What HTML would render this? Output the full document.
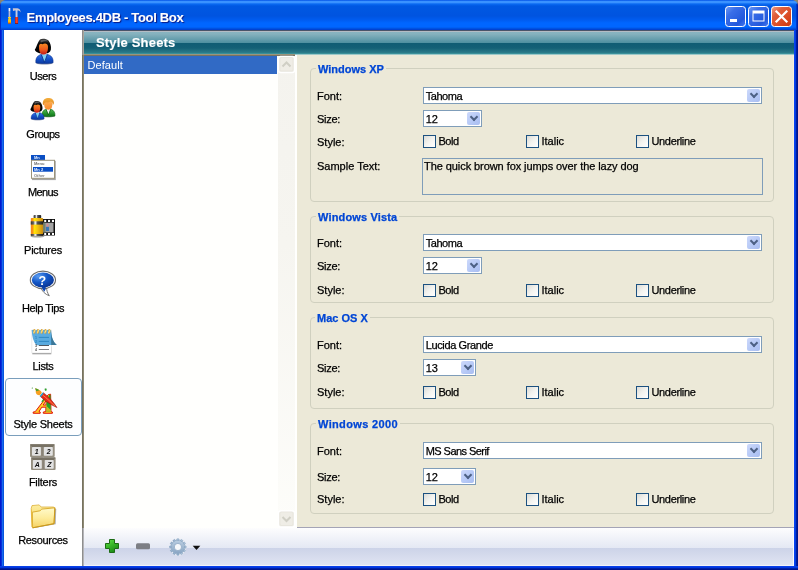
<!DOCTYPE html>
<html><head><meta charset="utf-8"><title>Employees.4DB - Tool Box</title>
<style>
html,body{margin:0;padding:0;}
body{width:798px;height:570px;overflow:hidden;background:#0a55e0;font-family:"Liberation Sans",sans-serif;font-size:11px;color:#000;-webkit-text-stroke:0.25px;}
#win{position:absolute;left:0;top:0;width:798px;height:570px;overflow:hidden;background:#0b54df;will-change:transform;}
.abs{position:absolute;}
#title{position:absolute;left:0;top:0;width:798px;height:30px;background:linear-gradient(to bottom,#0050e6 0px,#3a92ff 1.5px,#3a92ff 2.5px,#0a6af2 4px,#0058e2 6px,#0054e0 16px,#005cf0 20px,#0066ff 23px,#0066ff 27px,#0052e0 28.5px,#003acc 30px);}
#title .cap{-webkit-text-stroke:0.1px;position:absolute;left:26.6px;top:9.5px;font-weight:bold;font-size:13px;line-height:16px;color:#fff;text-shadow:1px 1px 1px #0a1883;white-space:nowrap;letter-spacing:-0.32px;}
#lb{position:absolute;left:0;top:30px;width:4px;height:540px;background:linear-gradient(to right,#0019cf 0,#0019cf 1px,#0831d9 1px,#0831d9 2px,#166aee 2px,#166aee 3px,#0855dd 3px);}
#rb{position:absolute;left:794px;top:30px;width:4px;height:540px;background:linear-gradient(to right,#0842f0 0,#0842f0 1px,#003ce0 1px,#003ce0 2px,#001ea0 2px,#001ea0 3px,#00138c 3px);}
#bb{position:absolute;left:0;top:566px;width:798px;height:4px;background:linear-gradient(to bottom,#0a40e8 0,#0a40e8 1px,#0038e0 1px,#0038e0 2px,#0020a8 2px,#0020a8 3px,#00158c 3px);}
#side{position:absolute;left:4px;top:30px;width:78px;height:536px;background:#fff;}
#sideline{position:absolute;left:82px;top:30px;width:2px;height:536px;background:linear-gradient(to right,#77735f 0,#77735f 1px,#8e8a74 1px);}
#sideline2{position:absolute;left:82px;top:30px;width:2px;height:25px;background:linear-gradient(to right,#8c8c8c 0,#8c8c8c 1px,#a8a49a 1px);}
#sideline3{position:absolute;left:82px;top:528px;width:2px;height:38px;background:linear-gradient(to right,#8e8e8e 0,#8e8e8e 1px,#b4b4b8 1px);}
#hline{position:absolute;left:84px;top:54px;width:211px;height:2px;background:linear-gradient(to bottom,#9a947c 0,#9a947c 1px,#767260 1px);}
#hdr{position:absolute;left:84px;top:30px;width:710px;height:25px;background:linear-gradient(to bottom,#4a5468 0px,#4a5468 1px,#b4bcc4 1px,#b4bcc4 2px,#88b4c0 2px,#86b2be 4px,#4e8fa0 13px,#105c74 13px,#146076 18px,#2a7a88 22.5px,#409aa2 24px,#9cc8c8 24px,#9cc8c8 25px);}
#hdr .t{-webkit-text-stroke:0.1px;position:absolute;left:12px;top:5px;letter-spacing:0.18px;font-weight:bold;font-size:13px;line-height:16px;color:#fff;white-space:nowrap;}
#list{position:absolute;left:84px;top:56px;width:213px;height:472px;background:#fffffd;}
#sel{position:absolute;left:0;top:0;width:193px;height:18px;background:#316ac5;color:#fff;}
#sel span{-webkit-text-stroke:0;position:absolute;left:3.4px;top:3px;letter-spacing:0.1px;line-height:13px;}
#sbar{position:absolute;left:278px;top:56px;width:17px;height:471px;background:linear-gradient(to bottom,#f4f3ee 0,#f6f5f0 40%,#fdfdfa 100%);}
#main{position:absolute;left:297px;top:55px;width:497px;height:472px;background:#ece9d8;}
#mainb{position:absolute;left:297px;top:527px;width:497px;height:1px;background:#a4a4b6;}
#tool{position:absolute;left:84px;top:528px;width:710px;height:38px;background:linear-gradient(to bottom,#fdfdfe 0,#e4e8f4 20px,#ccd3e8 20px,#e0e4f2 37px,#f2f3f8 37px,#f2f3f8 38px);}
.ic{position:absolute;}
.lbl{position:absolute;left:4px;width:78px;text-align:center;line-height:13px;white-space:nowrap;}
.gb{position:absolute;left:310px;width:464px;border:1px solid #d0d0bf;border-radius:4px;box-sizing:border-box;}
.gt{position:absolute;left:316px;padding:0 2px;background:#ece9d8;color:#0046d5;font-weight:bold;line-height:13px;white-space:nowrap;}
.fl{position:absolute;left:317px;line-height:13px;white-space:nowrap;}
.combo{position:absolute;left:423px;height:17px;box-sizing:border-box;border:1px solid #7f9db9;background:#fff;}
.combo span{position:absolute;left:1.7px;top:2px;line-height:13px;white-space:nowrap;}
.combo i{position:absolute;right:1px;top:1px;width:13px;height:13px;border-radius:2px;background:linear-gradient(135deg,#cdd9fb 0,#b5c8f6 60%,#a9bdf0 100%);}
.combo i:after{content:"";position:absolute;left:3.5px;top:1.6px;width:4px;height:4px;border-right:2px solid #4d6185;border-bottom:2px solid #4d6185;transform:rotate(45deg);box-sizing:content-box;}
.cb{position:absolute;width:13px;height:13px;box-sizing:border-box;border:1px solid #1c5180;background:linear-gradient(135deg,#dcdcd7 0,#f3f3ef 50%,#fff 100%);}
.cl{position:absolute;line-height:13px;white-space:nowrap;}
</style></head><body>
<div id="win">
<div id="title"><span class="cap">Employees.4DB - Tool Box</span></div>
<div id="lb"></div><div id="rb"></div><div id="bb"></div>
<div id="side"></div>
<div id="sideline"></div><div id="sideline2"></div><div id="sideline3"></div>
<div id="hdr"><span class="t">Style Sheets</span></div>
<div id="list"><div id="sel"><span>Default</span></div></div>
<div id="sbar"></div>
<div id="main"></div><div id="mainb"></div><div id="hline"></div><div class="abs" style="left:295px;top:55px;width:2px;height:473px;background:#fffffd"></div>
<div id="tool"></div><div class="abs" style="left:793px;top:528px;width:1px;height:38px;background:#fafbfd"></div><div class="abs" style="left:793px;top:55px;width:1px;height:472px;background:#f6f0dc"></div>

<!-- sidebar labels -->
<div class="lbl" style="top:70px;letter-spacing:-0.42px">Users</div>
<div class="lbl" style="top:128px;letter-spacing:-0.46px">Groups</div>
<div class="lbl" style="top:186px;letter-spacing:-0.6px">Menus</div>
<div class="lbl" style="top:244px;letter-spacing:-0.23px">Pictures</div>
<div class="lbl" style="top:302px;letter-spacing:-0.44px">Help Tips</div>
<div class="lbl" style="top:360px;letter-spacing:-0.33px">Lists</div>
<div class="abs" style="left:5px;top:378px;width:77px;height:58px;box-sizing:border-box;border:1px solid #7a9ebc;border-radius:4px;background:#fdfeff"></div>
<div class="lbl" style="top:418px;letter-spacing:-0.23px">Style Sheets</div>
<div class="lbl" style="top:476px;letter-spacing:-0.25px">Filters</div>
<div class="lbl" style="top:534px;letter-spacing:-0.34px">Resources</div>

<!-- group boxes -->
<div class="gb" style="top:68px;height:134px"></div>
<div class="gt" style="top:63px">Windows XP</div>
<div class="gb" style="top:216px;height:87px"></div>
<div class="gt" style="top:211px;letter-spacing:0.15px">Windows Vista</div>
<div class="gb" style="top:317px;height:92px"></div>
<div class="gt" style="top:312px;left:315px">Mac OS X</div>
<div class="gb" style="top:423px;height:91px"></div>
<div class="gt" style="top:418px;letter-spacing:0.35px">Windows 2000</div>

<!-- group 1 -->
<div class="fl" style="top:90px">Font:</div>
<div class="combo" style="top:87px;width:339px"><span style="letter-spacing:-0.44px">Tahoma</span><i></i></div>
<div class="fl" style="top:113px;letter-spacing:-0.3px">Size:</div>
<div class="combo" style="top:110px;width:59px"><span>12</span><i></i></div>
<div class="fl" style="top:136px">Style:</div>
<div class="cb" style="left:423px;top:135px"></div><div class="cl" style="left:438.5px;top:135px;letter-spacing:-0.5px">Bold</div>
<div class="cb" style="left:526px;top:135px"></div><div class="cl" style="left:541.5px;top:135px">Italic</div>
<div class="cb" style="left:636px;top:135px"></div><div class="cl" style="left:651.5px;top:135px;letter-spacing:-0.35px">Underline</div>
<div class="fl" style="top:160px">Sample Text:</div>
<div class="abs" style="left:422px;top:158px;width:341px;height:37px;box-sizing:border-box;border:1px solid #7f9db9"><span class="abs" style="left:1px;top:1px;line-height:13px;white-space:nowrap;letter-spacing:-0.07px">The quick brown fox jumps over the lazy dog</span></div>

<!-- group 2 -->
<div class="fl" style="top:237px">Font:</div>
<div class="combo" style="top:234px;width:339px"><span style="letter-spacing:-0.44px">Tahoma</span><i></i></div>
<div class="fl" style="top:260px;letter-spacing:-0.3px">Size:</div>
<div class="combo" style="top:257px;width:59px"><span>12</span><i></i></div>
<div class="fl" style="top:284px">Style:</div>
<div class="cb" style="left:423px;top:284px"></div><div class="cl" style="left:438.5px;top:284px;letter-spacing:-0.5px">Bold</div>
<div class="cb" style="left:526px;top:284px"></div><div class="cl" style="left:541.5px;top:284px">Italic</div>
<div class="cb" style="left:636px;top:284px"></div><div class="cl" style="left:651.5px;top:284px;letter-spacing:-0.35px">Underline</div>

<!-- group 3 -->
<div class="fl" style="top:339px">Font:</div>
<div class="combo" style="top:336px;width:339px"><span style="letter-spacing:-0.37px">Lucida Grande</span><i></i></div>
<div class="fl" style="top:362px;letter-spacing:-0.3px">Size:</div>
<div class="combo" style="top:359px;width:53px"><span>13</span><i></i></div>
<div class="fl" style="top:386px">Style:</div>
<div class="cb" style="left:423px;top:386px"></div><div class="cl" style="left:438.5px;top:386px;letter-spacing:-0.5px">Bold</div>
<div class="cb" style="left:526px;top:386px"></div><div class="cl" style="left:541.5px;top:386px">Italic</div>
<div class="cb" style="left:636px;top:386px"></div><div class="cl" style="left:651.5px;top:386px;letter-spacing:-0.35px">Underline</div>

<!-- group 4 -->
<div class="fl" style="top:445px">Font:</div>
<div class="combo" style="top:442px;width:339px"><span style="letter-spacing:-0.55px">MS Sans Serif</span><i></i></div>
<div class="fl" style="top:471px;letter-spacing:-0.3px">Size:</div>
<div class="combo" style="top:468px;width:53px"><span>12</span><i></i></div>
<div class="fl" style="top:493px">Style:</div>
<div class="cb" style="left:423px;top:493px"></div><div class="cl" style="left:438.5px;top:493px;letter-spacing:-0.5px">Bold</div>
<div class="cb" style="left:526px;top:493px"></div><div class="cl" style="left:541.5px;top:493px">Italic</div>
<div class="cb" style="left:636px;top:493px"></div><div class="cl" style="left:651.5px;top:493px;letter-spacing:-0.35px">Underline</div>

<svg id="icons" class="abs" style="left:0;top:0" width="798" height="570" viewBox="0 0 798 570">
<defs>
<linearGradient id="gBtn" x1="0" y1="0" x2="1" y2="1"><stop offset="0" stop-color="#6f9bf5"/><stop offset="0.3" stop-color="#3a6ee8"/><stop offset="0.75" stop-color="#2258dc"/><stop offset="1" stop-color="#4a7cf0"/></linearGradient>
<linearGradient id="gCls" x1="0" y1="0" x2="1" y2="1"><stop offset="0" stop-color="#f0a088"/><stop offset="0.3" stop-color="#e0603c"/><stop offset="0.75" stop-color="#d8441c"/><stop offset="1" stop-color="#c83c14"/></linearGradient>
<linearGradient id="gYel" x1="0" y1="0" x2="0" y2="1"><stop offset="0" stop-color="#ffd820"/><stop offset="0.8" stop-color="#ffc000"/><stop offset="1" stop-color="#e07010"/></linearGradient>
<linearGradient id="gRed" x1="0" y1="0" x2="1" y2="0"><stop offset="0" stop-color="#c82010"/><stop offset="0.5" stop-color="#f04028"/><stop offset="1" stop-color="#d02818"/></linearGradient>
<linearGradient id="gPlus" x1="0" y1="0" x2="0.6" y2="1"><stop offset="0" stop-color="#6be050"/><stop offset="0.5" stop-color="#38b828"/><stop offset="1" stop-color="#1e8a18"/></linearGradient>
<linearGradient id="gGear" x1="0" y1="0" x2="0" y2="1"><stop offset="0" stop-color="#b8cce0"/><stop offset="1" stop-color="#8aa6c4"/></linearGradient>

<linearGradient id="gFace" x1="0" y1="0" x2="0" y2="1"><stop offset="0" stop-color="#f88a24"/><stop offset="0.55" stop-color="#ee5a1c"/><stop offset="1" stop-color="#c01818"/></linearGradient>
<linearGradient id="gFaceM" x1="0" y1="0" x2="0" y2="1"><stop offset="0" stop-color="#ffb050"/><stop offset="1" stop-color="#f88a30"/></linearGradient>
<linearGradient id="gHairM" x1="0" y1="0" x2="0" y2="1"><stop offset="0" stop-color="#f4b040"/><stop offset="1" stop-color="#e08820"/></linearGradient>
<linearGradient id="gBlue" x1="0" y1="0" x2="0" y2="1"><stop offset="0" stop-color="#3a78e8"/><stop offset="0.5" stop-color="#1450c8"/><stop offset="1" stop-color="#0a389c"/></linearGradient>
<linearGradient id="gGreen" x1="0" y1="0" x2="0" y2="1"><stop offset="0" stop-color="#58b858"/><stop offset="0.5" stop-color="#289830"/><stop offset="1" stop-color="#107018"/></linearGradient>
<linearGradient id="gHair" x1="0" y1="0" x2="0" y2="1"><stop offset="0" stop-color="#3a3a3a"/><stop offset="0.35" stop-color="#0a0a0a"/><stop offset="1" stop-color="#000"/></linearGradient>
<linearGradient id="gCan" x1="0" y1="0" x2="1" y2="0"><stop offset="0" stop-color="#f08818"/><stop offset="0.14" stop-color="#f89018"/><stop offset="0.3" stop-color="#ffe408"/><stop offset="0.55" stop-color="#f4c410"/><stop offset="1" stop-color="#c8880c"/></linearGradient>
<linearGradient id="gCanD" x1="0" y1="0" x2="1" y2="0"><stop offset="0" stop-color="#303030"/><stop offset="0.22" stop-color="#686868"/><stop offset="0.36" stop-color="#f8f8f8"/><stop offset="0.55" stop-color="#505050"/><stop offset="1" stop-color="#202020"/></linearGradient>
<radialGradient id="gBub" cx="0.3" cy="0.25" r="0.9"><stop offset="0" stop-color="#5a9cf0"/><stop offset="0.45" stop-color="#1458c8"/><stop offset="1" stop-color="#062c88"/></radialGradient>
<linearGradient id="gFold" x1="0" y1="0" x2="0" y2="1"><stop offset="0" stop-color="#fffacc"/><stop offset="0.5" stop-color="#fdec9c"/><stop offset="1" stop-color="#f5d264"/></linearGradient>
<linearGradient id="gFoldB" x1="0" y1="0" x2="0" y2="1"><stop offset="0" stop-color="#fdeea0"/><stop offset="1" stop-color="#f2cc50"/></linearGradient>
<linearGradient id="gRing" x1="0" y1="0" x2="1" y2="1"><stop offset="0" stop-color="#b87808"/><stop offset="0.5" stop-color="#ffe080"/><stop offset="1" stop-color="#b87808"/></linearGradient>
<linearGradient id="gA" x1="0" y1="0" x2="0" y2="1"><stop offset="0" stop-color="#ffe838"/><stop offset="1" stop-color="#ffc020"/></linearGradient>
<linearGradient id="gBrush" x1="0" y1="0" x2="1" y2="0"><stop offset="0" stop-color="#c01008"/><stop offset="0.5" stop-color="#ff4030"/><stop offset="1" stop-color="#a80800"/></linearGradient>
<filter id="blur1" x="-20%" y="-20%" width="140%" height="160%"><feGaussianBlur stdDeviation="0.7"/></filter>
</defs>
<!-- corners -->
<rect x="0" y="3" width="1" height="27" fill="#0030c4"/><rect x="797" y="3" width="1" height="27" fill="#0024a8"/><rect x="796" y="4" width="1" height="26" fill="#0038cc"/>
<path d="M0,0 H5 C2.500,0.500 0.500,2.500 0,5 Z" fill="#8a8470"/>
<path d="M798,0 H793 C795.500,0.500 797.500,2.500 798,5 Z" fill="#8a8470"/>
<!-- title icon -->
<g id="ticon">
<rect x="8.6" y="8" width="1.7" height="3" fill="#f4f4ff"/>
<rect x="8.6" y="11" width="1.7" height="6" fill="#b4b8d8"/>
<path d="M8,17 H11 V18.3 H10.4 V19.2 H11 V23 H8 V19.2 H8.6 V18.3 H8 Z" fill="url(#gYel)"/>
<rect x="8" y="23" width="3" height="0.8" fill="#d05a10"/>
<path d="M12.8,8.2 H17.5 C19.5,8.4 20.6,10 20.8,12.6 C20,10.8 19,10.4 17.5,10.4 H15 L13,11 Z" fill="#c8c4d0"/>
<rect x="15.6" y="9.5" width="1.9" height="7.5" fill="#c8cce4"/>
<rect x="15" y="17" width="3.1" height="6.2" rx="0.5" fill="url(#gRed)"/>
<rect x="15" y="23" width="3.1" height="0.8" fill="#8a1408"/>
</g>
<!-- caption buttons -->
<g>
<rect x="725.5" y="6.5" width="20" height="20" rx="3" fill="url(#gBtn)" stroke="#fff" stroke-width="1"/>
<rect x="730" y="19" width="7" height="3" fill="#fff"/>
<rect x="748.5" y="6.5" width="20" height="20" rx="3" fill="url(#gBtn)" stroke="#fff" stroke-width="1"/>
<path d="M752.5,10.5 H764.5 V21.500 H752.5 Z M753.5,13.500 V20.500 H763.5 V13.500 Z" fill="#fff" fill-rule="evenodd"/>
<rect x="771.5" y="6.5" width="20" height="20" rx="3" fill="url(#gCls)" stroke="#fff" stroke-width="1"/>
<path d="M776.5,11.500 L786.5,21.500 M786.5,11.500 L776.5,21.500" stroke="#fff" stroke-width="2.2" stroke-linecap="square"/>
</g>
<!-- scroll buttons -->
<g>
<rect x="278.500" y="56.500" width="16" height="16" rx="2" fill="#edebe4" stroke="#fff" stroke-width="1.5"/>
<rect x="280" y="57.500" width="13" height="13.500" rx="1.500" fill="#efede6" stroke="#e4e2d8" stroke-width="0.6"/>
<path d="M282.500,66.500 L286.500,62.500 L290.500,66.500" fill="none" stroke="#d0cfc5" stroke-width="2"/>
<rect x="278.500" y="511" width="16" height="16" rx="2" fill="#edebe4" stroke="#fff" stroke-width="1.5"/>
<rect x="280" y="512" width="13" height="13.500" rx="1.500" fill="#efede6" stroke="#e4e2d8" stroke-width="0.6"/>
<path d="M282.500,517 L286.500,521 L290.500,517" fill="none" stroke="#d0cfc5" stroke-width="2"/>
</g>

<!-- Users icon -->
<g id="userF">
<ellipse cx="44.4" cy="63.4" rx="8.2" ry="1.1" fill="#000" opacity="0.25" filter="url(#blur1)"/>
<path d="M40,39.400 C42.500,38.300 46.200,38.700 48.500,40.600 C50.300,43 51.400,46.500 50.900,49.500 C50.300,52 48.500,53.200 47,53.200 L39.500,53.200 C37,52.800 35,51.300 34.800,49.600 C36.600,47.300 37.400,42.300 40,39.400 Z" fill="url(#gHair)"/>
<path d="M35.800,62.800 C35.400,59 36.600,56.400 39.600,55 L41.200,54.200 L44.300,55.500 L47.300,54.200 L49.200,55 C52.300,56.400 53.500,59 53.100,62.800 C50,64.200 39,64.200 35.800,62.800 Z" fill="url(#gBlue)" stroke="#0a2c84" stroke-width="0.500"/>
<path d="M40.300,40.600 C42.500,39.300 46,39.500 48.200,41.300 C46,41 43,41.300 40.800,42.600 Z" fill="#8a8a8a" opacity="0.550"/>
<path d="M41.800,54.600 H47 L45.300,60.500 L44.400,62 L43.300,60 Z" fill="#7cd0f4"/>
<path d="M41.300,54.600 L44.400,62.300 L47.400,54.600" fill="none" stroke="#0a2c84" stroke-width="0.800"/>
<path d="M39,46.500 C39,43.500 41,43.200 42.500,44.200 C44.500,43 48,43 48,46.800 C48,49.500 47.700,52 46.300,53.500 C45,54.900 42,54.900 40.700,53.500 C39.300,52 39,49.500 39,46.500 Z" fill="url(#gFace)"/>
</g>
<!-- Groups icon -->
<g id="userM">
<ellipse cx="48.500" cy="116.400" rx="6.500" ry="0.900" fill="#000" opacity="0.250" filter="url(#blur1)"/>
<path d="M42,116 C41.700,112.600 42.800,110.400 45.500,109.300 L48.300,110.300 L51.200,109.300 C54,110.400 55.300,112.600 55,116 C52,117 45,117 42,116 Z" fill="url(#gGreen)" stroke="#0c5c14" stroke-width="0.500"/>
<path d="M46.400,109.300 H50.400 L48.400,114.500 Z" fill="#f4f8f4"/>
<path d="M46,109.200 L48.400,115 L50.800,109.200" fill="none" stroke="#0c5c14" stroke-width="0.700"/>
<path d="M44.200,104 C44.200,101.500 46,100.500 48.300,100.500 C50.600,100.500 52.300,101.500 52.300,104 C52.300,106 52,107.800 51,108.800 C49.800,109.900 46.800,109.900 45.600,108.800 C44.500,107.800 44.200,106 44.200,104 Z" fill="url(#gFaceM)"/>
<path d="M42.900,104.500 C42.500,101 44,98.400 47.500,98 C50.500,97.700 53.800,99 54,102.500 C54,103.500 53.500,104.500 52.800,105 C52.800,103 52,101.800 50.500,101.500 C49,102.300 47.500,102.600 46,102.300 C44.800,102.600 44.200,103.600 44.200,105.200 Z" fill="url(#gHairM)"/>
</g>
<use href="#userF" transform="translate(36.900,119.800) scale(0.750) translate(-43.500,-63.800)"/>
<!-- Menus icon -->
<g id="menuI">
<rect x="32" y="160.800" width="23.800" height="19.300" fill="#000" opacity="0.350" filter="url(#blur1)"/>
<rect x="31" y="155" width="14" height="5" fill="#0a4ec4"/>
<rect x="31.500" y="160.300" width="23" height="18" fill="#fff" stroke="#9c947c" stroke-width="1"/>
<rect x="33" y="167" width="20" height="4.700" fill="#0a4ec4"/>
<text x="34" y="158.800" font-family="Liberation Sans, sans-serif" font-size="4" font-weight="bold" fill="#e8f0ff">Mn</text>
<text x="34" y="165" font-family="Liberation Sans, sans-serif" font-size="4" font-weight="bold" fill="#707070">Menu</text>
<text x="34" y="170.700" font-family="Liberation Sans, sans-serif" font-size="4" font-weight="bold" fill="#e8f0ff">Mn 2</text>
<text x="34" y="176.700" font-family="Liberation Sans, sans-serif" font-size="4" font-weight="bold" fill="#808080">Other</text>
</g>
<!-- Pictures icon -->
<g id="picI">
<ellipse cx="37.500" cy="236.300" rx="7" ry="1.200" fill="#000" opacity="0.350" filter="url(#blur1)"/>
<rect x="43" y="219" width="12" height="16.500" fill="#0c0c0c"/>
<g fill="#fff"><rect x="44.200" y="219.900" width="2" height="2.100"/><rect x="48" y="219.900" width="2.100" height="2.100"/><rect x="51.900" y="219.900" width="2.100" height="2.100"/>
<rect x="44.200" y="233" width="2" height="2"/><rect x="48" y="233" width="2.100" height="2"/><rect x="51.900" y="233" width="2.100" height="2"/></g>
<rect x="43.300" y="222.700" width="10.200" height="9.700" fill="#a4a4a4"/>
<rect x="43.300" y="222.700" width="2.200" height="9.700" fill="#708070"/>
<rect x="46.600" y="223.600" width="1.700" height="3.400" fill="#d88890"/>
<rect x="46" y="226.800" width="3" height="4.200" fill="#3878b8"/>
<rect x="33.600" y="215" width="7.600" height="3.400" rx="0.800" fill="url(#gCanD)"/>
<rect x="30.800" y="218" width="12.300" height="17.800" rx="0.800" fill="url(#gCan)"/>
<rect x="30.800" y="221.300" width="12.300" height="3.300" fill="url(#gCanD)"/>
<rect x="30.800" y="234" width="12.300" height="1.900" fill="url(#gCanD)"/>
</g>
<!-- Help Tips icon -->
<g id="helpI">
<path d="M40.800,287.500 C42,291 44.800,294.200 49.300,295.800 C47.200,292.500 46.600,290 46.500,287.500 Z" fill="#fff" stroke="#777" stroke-width="1"/>
<ellipse cx="42.900" cy="279.900" rx="12.600" ry="8.800" fill="#fff" stroke="#6c6c6c" stroke-width="1.100"/>
<path d="M41.600,286.500 L45.800,286.500 L45.600,289.200 L44.300,291.700 C43.200,290.500 42.200,288.800 41.600,286.500 Z" fill="#1048b0"/>
<ellipse cx="42.850" cy="280" rx="11.100" ry="7.400" fill="url(#gBub)"/>
<text x="42.300" y="285.100" text-anchor="middle" font-family="Liberation Sans, sans-serif" font-size="12.500" font-weight="bold" fill="#fff">?</text>
</g>

<!-- Lists icon -->
<g id="listI">
<rect x="32.300" y="347" width="19" height="7.300" fill="#000" opacity="0.380" filter="url(#blur1)"/>
<rect x="31.900" y="330" width="19.400" height="23" fill="#fff" stroke="#d4d4d4" stroke-width="0.500"/>
<path d="M31.700,330 H51 C51.500,336 52.500,341.500 56.800,344.800 C52,345.200 47,345 42,345 L36.500,345.200 C33.500,342 32,337 31.700,330 Z" fill="#5aabdf"/>
<path d="M51,331 C51.500,336 52.500,341.500 56.800,344.800 C54.500,345.100 52.500,345.100 51.200,345 Z" fill="#3c7898"/>
<g stroke="#2a84c0" stroke-width="0.900"><path d="M38.800,337.400 H49"/><path d="M38.800,341.400 H49"/></g>
<path d="M38.800,345.500 H49" stroke="#505860" stroke-width="1"/>
<path d="M38.800,349.500 H49" stroke="#707478" stroke-width="0.900"/>
<g font-family="Liberation Sans, sans-serif" font-size="3.600" font-weight="bold">
<text x="35" y="338.600" fill="#2a84c0">1</text><text x="35" y="342.600" fill="#2a84c0">2</text><text x="35" y="346.700" fill="#444">3</text><text x="35" y="350.700" fill="#666">4</text></g>
<g fill="url(#gRing)"><rect x="33.300" y="329" width="2.200" height="4.800" rx="1.100" transform="rotate(8 34.400 331.400)"/><rect x="36.900" y="329" width="2.200" height="4.800" rx="1.100" transform="rotate(8 38 331.400)"/><rect x="40.700" y="329" width="2.200" height="4.800" rx="1.100" transform="rotate(8 41.800 331.400)"/><rect x="44.400" y="329" width="2.200" height="4.800" rx="1.100" transform="rotate(8 45.500 331.400)"/><rect x="48.200" y="329" width="2.200" height="4.800" rx="1.100" transform="rotate(8 49.300 331.400)"/></g>
</g>
<!-- Style Sheets icon -->
<g id="styleI">
<path d="M33.200,413.300 V412 L35.200,411.700 L48.300,394.600 L50.600,394.200 L51,411.600 L52.400,412 V413.300 H43.300 V412 L45.800,411.600 L45.900,407.200 H41.800 L39,411.500 L40.200,412 V413.300 Z M43.200,405 H46 L46.200,400.500 Z" fill="url(#gA)" stroke="#e01808" stroke-width="1" stroke-linejoin="round" fill-rule="evenodd"/>
<path d="M49,395 L50.500,394.700 L50.800,411.800 L46.300,411.600 L46.600,402 Z" fill="#28a028"/>
<path d="M46.500,406 L46.300,411.600 L50.800,411.800 L50.800,410 Z" fill="#f0c020" opacity="0.800"/>
<path d="M41.300,401.500 L43.800,398.200 L44.800,399 L42.500,402.300 Z" fill="#30a830"/>
<path d="M40.300,396.500 L43.400,392.700 C48.500,396.500 53.500,402 57,407.600 C50.500,404.800 45,400.800 40.300,396.500 Z" fill="#e82818" stroke="#8a0c04" stroke-width="0.500"/>
<path d="M42.600,395 C46.500,398 51,402.300 55,406.200" stroke="#ff9858" stroke-width="0.800" fill="none"/>
<path d="M39.700,395.900 L42.500,392.400 L43.700,393.300 L40.900,397 Z" fill="#18a8e0"/>
<path d="M35,388.300 C37.500,389 40.500,390 41.800,392.300 C41.500,393.800 40.500,394.800 39.600,395.200 C37.500,395.300 36,394 35.800,392.500 C36,391 35.700,389.600 35,388.300 Z" fill="#f8a020"/>
<path d="M35,388.300 C36.800,388.800 38.300,389.400 39.500,390.200 L36.300,391.200 C36,390.200 35.600,389.200 35,388.300 Z" fill="#48a030"/>
<circle cx="32.300" cy="388" r="0.600" fill="#308828"/>
<path d="M44.600,388.800 L46.200,388.200 L46.800,390 L45.900,391 L44.800,390.200 Z" fill="#30a030"/>
</g>
<!-- Filters icon -->
<g id="filtI" font-family="Liberation Sans, sans-serif" font-size="7" font-weight="bold" font-style="italic" text-anchor="middle">
<rect x="30" y="444" width="12.300" height="13" rx="1" fill="#958f81"/><rect x="42.300" y="444" width="12.400" height="13" rx="1" fill="#958f81"/>
<rect x="31" y="457.300" width="12.300" height="12.700" rx="1" fill="#958f81"/><rect x="43.300" y="457.300" width="12.300" height="12.700" rx="1" fill="#958f81"/>
<path d="M42.300,444 V457 M43.300,457.500 V470" stroke="#6e685c" stroke-width="0.700"/>
<path d="M30,444.500 H54.600 L52.800,447 H32 Z" fill="#777164"/>
<path d="M31,457.600 H55.500 L53.700,460 H32.900 Z" fill="#777164"/>
<rect x="32" y="446.900" width="8.900" height="8.900" rx="0.800" fill="#e2e2e2"/><rect x="43.900" y="446.900" width="8.900" height="8.900" rx="0.800" fill="#e2e2e2"/>
<rect x="32.900" y="460" width="8.900" height="8.700" rx="0.800" fill="#e2e2e2"/><rect x="44.800" y="460" width="8.900" height="8.700" rx="0.800" fill="#e2e2e2"/>
<text x="36.600" y="454" fill="#111">1</text><text x="48.600" y="454" fill="#111">2</text>
<text x="37.200" y="467" fill="#111">A</text><text x="49.400" y="467" fill="#111">Z</text>
</g>
<!-- Resources icon -->
<g id="foldI">
<path d="M33,527.500 L55,523.500 L55.500,509" stroke="#000" stroke-width="1.500" opacity="0.300" fill="none" filter="url(#blur1)"/>
<path d="M31.200,508.500 L32,505.600 L39.200,504.900 L41.200,507 L53.800,507 L54.500,508 L54,523 L32,527 Z" fill="url(#gFoldB)" stroke="#d8a828" stroke-width="0.700" stroke-linejoin="round"/>
<path d="M32.300,512.200 L40,510.800 L41.800,509.100 L54.900,507.800 L54,523.700 L32.600,527.800 Z" fill="url(#gFold)" stroke="#d6a628" stroke-width="0.900" stroke-linejoin="round"/>
<path d="M54.900,507.800 L54,523.700 L32.600,527.800" fill="none" stroke="#c8961c" stroke-width="0.900"/>
<path d="M31.200,508.500 L31.800,527.200 L32.600,527.800 L32.300,512.200 Z" fill="#e8b838"/>
</g>
<!-- toolbar icons -->
<g>
<path d="M109.500,539.500 H114.500 V543.500 H118.500 V548.500 H114.500 V552.500 H109.500 V548.500 H105.500 V543.500 H109.500 Z" fill="url(#gPlus)" stroke="#1c6c14" stroke-width="1" stroke-linejoin="round"/>
<rect x="136" y="543.200" width="14" height="6" rx="1.500" fill="#7c7e84"/>
<g transform="translate(177.900,547)">
<ellipse cx="0.300" cy="1.200" rx="8" ry="7.600" fill="#fff" opacity="0.550" filter="url(#blur1)"/>
<g fill="url(#gGear)" stroke="#7f9cba" stroke-width="0.500">
<g id="teeth">
<rect x="-1.150" y="-8.200" width="2.300" height="2.600" rx="0.400"/>
<rect x="-1.150" y="5.600" width="2.300" height="2.600" rx="0.400"/>
</g>
<use href="#teeth" transform="rotate(30)"/>
<use href="#teeth" transform="rotate(60)"/>
<use href="#teeth" transform="rotate(90)"/>
<use href="#teeth" transform="rotate(120)"/>
<use href="#teeth" transform="rotate(150)"/>
<circle r="6.500"/>
</g>
<circle r="6.200" fill="url(#gGear)"/>
<circle r="3.600" fill="#f6f8fb" stroke="#86a2c0" stroke-width="0.700"/>
</g>
<path d="M192.700,545.700 H200.300 L196.500,549.900 Z" fill="#111"/>
</g>
</svg>

</div>
</body></html>
